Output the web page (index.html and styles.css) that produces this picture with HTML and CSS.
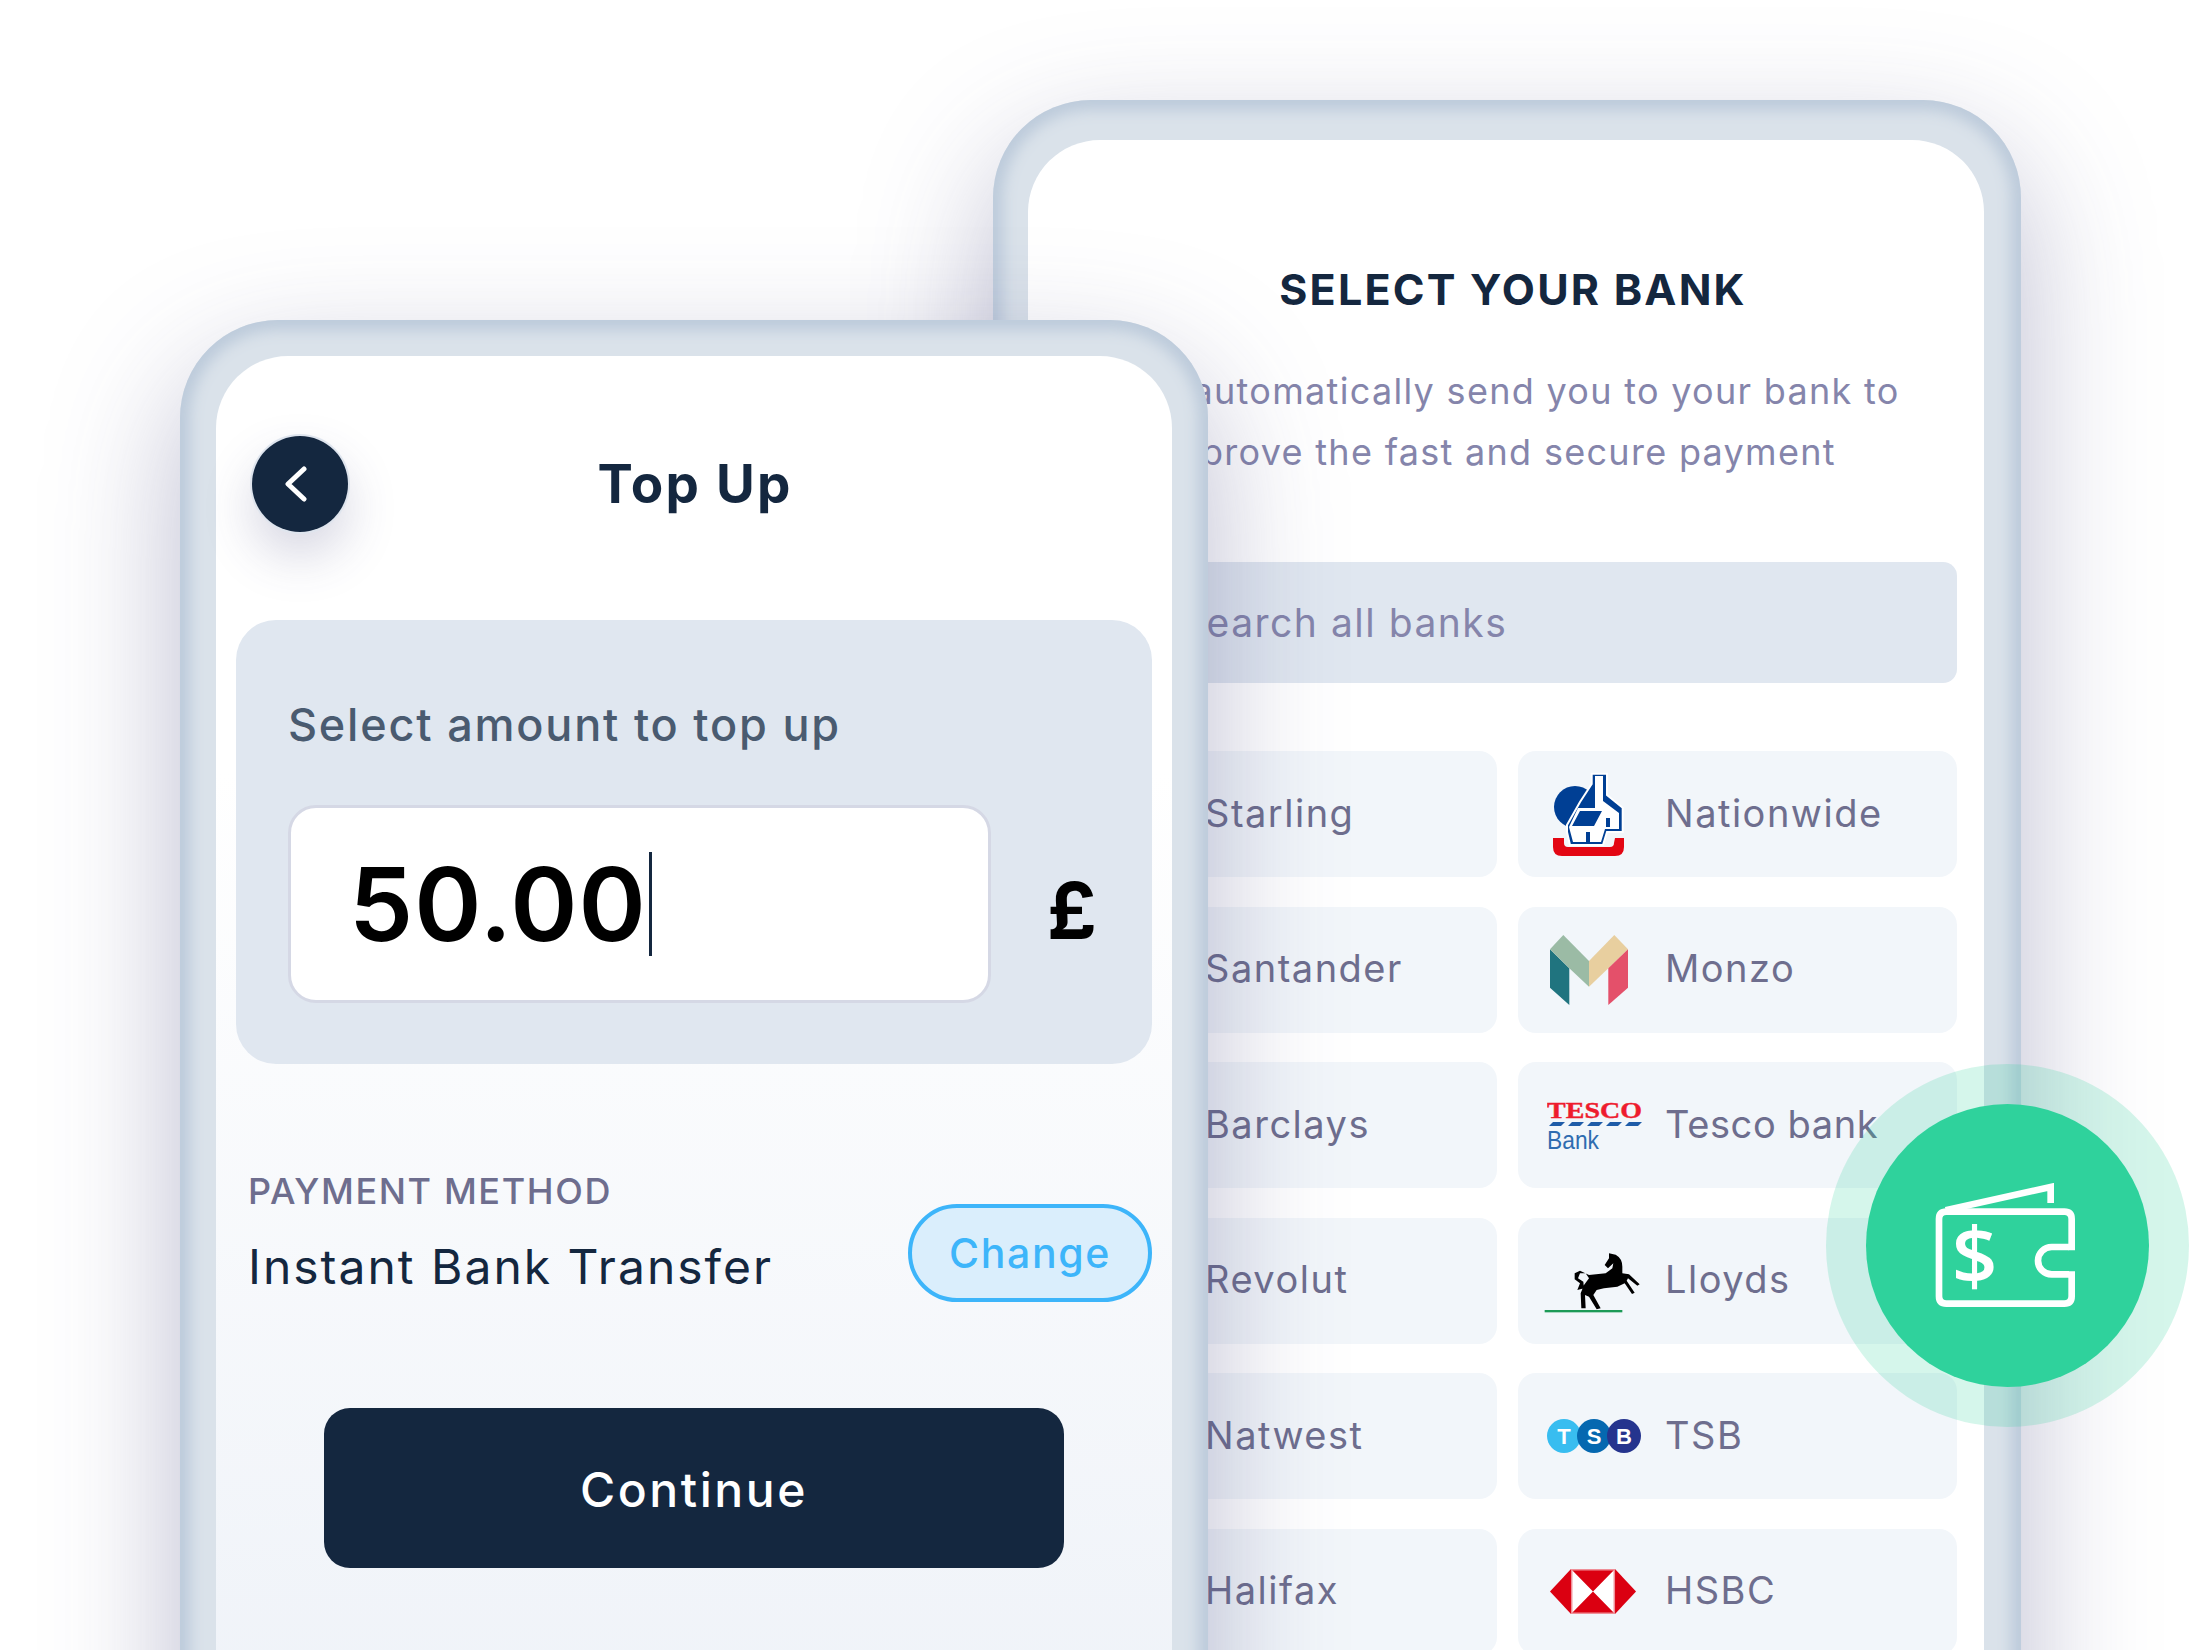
FILE: index.html
```html
<!DOCTYPE html>
<html>
<head>
    <title>Top Up</title>
    <link rel="stylesheet" href="styles.css">
</head>
<body>
    <div class="stage">
        <div class="phone phone-back">
            <div class="screen bank-screen">
                <h2 class="bank-title">SELECT YOUR BANK</h2>
                <p class="bank-desc">We'll automatically send you to your bank to<br>approve the fast and secure payment</p>
                <div class="search">Search all banks</div>
                <div class="bank-grid">
                    <div class="bank"><span class="bank-logo"></span><span class="bank-name">Starling</span></div>
                    <div class="bank">
                        <span class="bank-logo">
                            <svg class="logo-nationwide" width="72" height="84" viewBox="0 0 72 84">
                                <path fill="#e30613" d="M0 66H11V71Q11 75 15 75H57Q61 75 61 71L62 66H71V75Q71 84 62 84H9Q0 84 0 75Z"/>
                                <circle cx="22" cy="35" r="21" fill="#003f94"/>
                                <path fill="#003f94" stroke="#fff" stroke-width="2" d="M38.7 1.7H54V23L69.7 35.7V60H54L50 73H17L14 60V53L27 30L38.7 12Z"/>
                                <path fill="#fff" d="M42 4H50V29L66 41V57H52L48 70H20L16 55L25 36H42Z"/>
                                <path fill="#003f94" d="M27 39H49L41 54H19Z"/>
                                <path fill="#003f94" d="M53 46H57V55H53ZM33 60H37V70H33Z"/>
                            </svg>
                        </span>
                        <span class="bank-name">Nationwide</span>
                    </div>
                    <div class="bank"><span class="bank-logo"></span><span class="bank-name">Santander</span></div>
                    <div class="bank">
                        <span class="bank-logo">
                            <svg width="78" height="70" viewBox="0 0 78 70">
                                <path fill="#20747f" d="M0 14.3L19.3 33.3V70L0 52.7Z"/>
                                <path fill="#9bbba5" d="M0 14.3L13.3 0L39 26V51.7L19.3 33.3Z"/>
                                <path fill="#e8cf9f" d="M39 26L64.3 0L78 14.3L58.3 33.3L39 51.7Z"/>
                                <path fill="#e4506a" d="M78 14.3V52.7L58.3 70V33.3Z"/>
                            </svg>
                        </span>
                        <span class="bank-name">Monzo</span>
                    </div>
                    <div class="bank"><span class="bank-logo"></span><span class="bank-name">Barclays</span></div>
                    <div class="bank">
                        <span class="bank-logo">
                            <svg class="logo-tesco" width="100" height="66" viewBox="0 -8 100 66">
                                <text class="tesco-word" x="0" y="16.5" textLength="95" lengthAdjust="spacingAndGlyphs">TESCO</text>
                                <path fill="#1f5ca8" d="M2 25L6 21H18L14 25ZM21 25L25 21H37L33 25ZM40 25L44 21H56L52 25ZM59 25L63 21H75L71 25ZM78 25L82 21H95L91 25Z"/>
                                <text class="tesco-bank" x="0" y="48" textLength="52" lengthAdjust="spacingAndGlyphs">Bank</text>
                            </svg>
                        </span>
                        <span class="bank-name bank-name-tight">Tesco bank</span>
                    </div>
                    <div class="bank"><span class="bank-logo"></span><span class="bank-name">Revolut</span></div>
                    <div class="bank">
                        <span class="bank-logo">
                            <svg class="logo-lloyds" width="100" height="66" viewBox="70 30 300 198">
                                <path fill="#000" d="M265 40L285 44Q305 55 305 80V100L325 103L357 133L350 137L322 115L318 122L342 158L334 162L312 130L290 140L250 145L228 150L218 165L240 205L228 208L205 170L193 165L195 205L182 205L180 160L190 135L205 115L195 100L178 100L172 115L188 125L190 145L170 150L178 130L162 118V100L178 92L205 105L255 100L275 85L278 70L262 85L252 75L265 55Z"/>
                                <rect x="72" y="210" width="233" height="7" fill="#1d9a57"/>
                            </svg>
                        </span>
                        <span class="bank-name">Lloyds</span>
                    </div>
                    <div class="bank"><span class="bank-logo"></span><span class="bank-name">Natwest</span></div>
                    <div class="bank">
                        <span class="bank-logo">
                            <svg class="logo-tsb" width="94" height="36" viewBox="0 0 94 36">
                                <circle cx="17" cy="18" r="17" fill="#38bdf0"/>
                                <circle cx="47" cy="18" r="17" fill="#0568b0"/>
                                <circle cx="77" cy="18" r="17" fill="#25348e"/>
                                <text class="tsb-letter" x="17" y="26">T</text>
                                <text class="tsb-letter" x="47" y="26">S</text>
                                <text class="tsb-letter" x="77" y="26">B</text>
                            </svg>
                        </span>
                        <span class="bank-name">TSB</span>
                    </div>
                    <div class="bank"><span class="bank-logo"></span><span class="bank-name">Halifax</span></div>
                    <div class="bank">
                        <span class="bank-logo">
                            <svg width="86" height="45" viewBox="0 0 86 45">
                                <path fill="#db0011" d="M0 22.5L21 0V45Z"/>
                                <path fill="#db0011" d="M86 22.5L65 0V45Z"/>
                                <path fill="#fff" d="M21 0H65V45H21Z"/>
                                <path fill="#db0011" d="M21 45H65L43 22.5ZM21 0H65L43 22.5Z"/>
                                <path fill="none" stroke="#ef8f98" stroke-width="1.5" d="M21.7 .7H64.3V44.3H21.7Z"/>
                            </svg>
                        </span>
                        <span class="bank-name">HSBC</span>
                    </div>
                </div>
            </div>
        </div>

        <div class="phone phone-front">
            <div class="screen topup-screen">
                <div class="topup-header">
                    <button class="back-btn">
                        <svg width="24" height="36" viewBox="0 0 24 36">
                            <path d="M20 3L4 18L20 33" fill="none" stroke="#fff" stroke-width="5" stroke-linecap="round" stroke-linejoin="round"/>
                        </svg>
                    </button>
                    <h1 class="topup-title">Top Up</h1>
                </div>
                <div class="amount-panel">
                    <div class="amount-label">Select amount to top up</div>
                    <div class="amount-row">
                        <div class="amount-input"><span class="amount-value">50.00</span><span class="caret"></span></div>
                        <span class="currency">£</span>
                    </div>
                </div>
                <div class="payment">
                    <div>
                        <div class="payment-label">PAYMENT METHOD</div>
                        <div class="payment-name">Instant Bank Transfer</div>
                    </div>
                    <button class="change-btn">Change</button>
                </div>
                <button class="continue-btn">Continue</button>
            </div>
        </div>

        <div class="wallet-badge">
            <svg width="140" height="125" viewBox="168 70 420 375">
                <g fill="none" stroke="#fff" stroke-width="20">
                    <path d="M578 272V178Q578 156 556 156H202Q180 156 180 178V410Q180 432 202 432H556Q578 432 578 410V335"/>
                    <path d="M200 152L515 82V130"/>
                    <path d="M570 262H518A40 40 0 0 0 518 344H570"/>
                </g>
                <text class="wallet-dollar" x="287" y="374">$</text>
            </svg>
        </div>
    </div>
</body>
</html>
```

FILE: styles.css
```css
body {
    margin: 0;
    background-color: #fff;
    font-family: Inter, "Noto Sans", sans-serif;
}

h1, h2, p {
    margin: 0;
}

button {
    border: none;
    font-family: inherit;
    cursor: pointer;
}

.stage {
    position: relative;
    width: 2200px;
    height: 1650px;
    overflow: hidden;
    background-color: #fff;
    padding: 100px 0 0 993px;
    box-sizing: border-box;
}

.phone {
    box-sizing: border-box;
    width: 1028px;
    height: 1700px;
    padding: 40px 37px 0 35px;
    background-color: #dae2ea;
    border-radius: 98px;
    box-shadow: inset 0 0 14px 10px #bdcbdb, 0 50px 130px rgba(70, 70, 125, 0.36);
}

.phone-front {
    position: absolute;
    left: 180px;
    top: 320px;
    width: 1028px;
    padding: 36px 36px 0;
}

.screen {
    box-sizing: border-box;
    height: 100%;
    border-radius: 72px 72px 0 0;
    background-color: #fff;
}

/* back phone */
.bank-screen {
    padding: 124px 27px 0;
}

.bank-title {
    padding-left: 14px;
    font-size: 43px;
    line-height: 50px;
    font-weight: 700;
    text-align: center;
    letter-spacing: 2.2px;
    color: #14273f;
}

.bank-desc {
    margin-top: 47px;
    padding-right: 20px;
    font-size: 36px;
    line-height: 61px;
    text-align: center;
    letter-spacing: 1.3px;
    color: #8585ab;
}

.search {
    margin-top: 79px;
    height: 121px;
    line-height: 121px;
    padding-left: 125px;
    background-color: #e0e7f0;
    border-radius: 14px;
    font-size: 39px;
    letter-spacing: 1.5px;
    color: #8585ab;
}

.bank-grid {
    display: grid;
    grid-template-columns: 1fr 1fr;
    gap: 29.5px 21px;
    margin: 68px 0 0 3px;
}

.bank {
    display: flex;
    align-items: center;
    height: 126px;
    background-color: #f2f6fa;
    border-radius: 18px;
}

.bank-logo {
    display: flex;
    flex: none;
    width: 147px;
    padding-left: 32px;
    box-sizing: border-box;
    align-items: center;
}

.bank-logo svg {
    display: block;
}

.bank-name {
    padding-bottom: 3px;
    font-size: 38px;
    letter-spacing: 1.5px;
    color: #6e6e8e;
}

.bank-name-tight {
    letter-spacing: 0.6px;
}

.logo-nationwide {
    margin-left: 3px;
}

.logo-tesco {
    margin: 2px 0 0 -3px;
}

.logo-lloyds {
    margin: 5px 0 0 -6px;
}

.logo-tsb {
    margin-left: -3px;
}

.tesco-word {
    font-family: "Liberation Serif", serif;
    font-size: 24px;
    font-weight: 700;
    fill: #ee1c2e;
    stroke: #ee1c2e;
    stroke-width: 0.4px;
}

.tesco-bank {
    font-family: "Liberation Sans", sans-serif;
    font-size: 26px;
    fill: #2f6cb0;
}

.tsb-letter {
    font-family: "Liberation Sans", sans-serif;
    font-size: 22px;
    font-weight: 700;
    text-anchor: middle;
    fill: #fff;
}

/* front phone */
.topup-screen {
    padding: 77px 20px 0;
    background: linear-gradient(to bottom, #fff 25%, #eef2f8 85%);
}

.topup-header {
    position: relative;
    display: flex;
    align-items: center;
    height: 100px;
    padding-left: 16px;
}

.back-btn {
    display: flex;
    align-items: center;
    justify-content: center;
    width: 96px;
    height: 96px;
    margin-top: 2px;
    padding: 0 8px 0 0;
    border-radius: 50%;
    background-color: #14273f;
    box-shadow: 0 0 0 2px #dfe5ee, 0 24px 50px rgba(70, 70, 125, 0.22);
}

.topup-title {
    flex: 1;
    margin: 2px 110px 0 0;
    text-align: center;
    font-size: 53px;
    font-weight: 700;
    letter-spacing: 2.2px;
    color: #14273f;
}

.amount-panel {
    margin-top: 87px;
    height: 444px;
    box-sizing: border-box;
    padding: 80px 52px 0;
    background-color: #e0e7f0;
    border-radius: 40px;
}

.amount-label {
    font-size: 45px;
    line-height: 50px;
    font-weight: 500;
    letter-spacing: 1.8px;
    color: #4a5b70;
}

.amount-row {
    display: flex;
    align-items: center;
    margin-top: 55px;
    margin-right: -12px;
}

.amount-input {
    display: flex;
    align-items: center;
    box-sizing: border-box;
    width: 703px;
    height: 198px;
    padding-left: 58px;
    background-color: #fff;
    border: 3px solid #d5d8e5;
    border-radius: 28px;
}

.amount-value {
    font-size: 102px;
    font-weight: 600;
    letter-spacing: 1px;
    color: #000;
}

.caret {
    width: 3px;
    height: 104px;
    margin-left: 2px;
    background-color: #14273f;
}

.currency {
    margin: 12px 0 0 56px;
    font-size: 78px;
    font-weight: 700;
    color: #000;
}

.payment {
    display: flex;
    justify-content: space-between;
    align-items: flex-end;
    margin-top: 102px;
    padding-left: 12px;
}

.payment-label {
    font-size: 36px;
    line-height: 50px;
    font-weight: 500;
    letter-spacing: 1.6px;
    color: #6e6e8e;
}

.payment-name {
    margin-top: 18px;
    font-size: 48px;
    line-height: 66px;
    letter-spacing: 2px;
    color: #14273f;
}

.change-btn {
    box-sizing: border-box;
    width: 244px;
    height: 98px;
    margin-bottom: -2px;
    border: 4px solid #3db5fa;
    border-radius: 49px;
    background-color: #daeefc;
    font-size: 41px;
    font-weight: 500;
    letter-spacing: 1.6px;
    color: #3db5fa;
}

.continue-btn {
    display: block;
    width: 740px;
    height: 160px;
    margin: 108px auto 0;
    padding-top: 3px;
    border-radius: 26px;
    background-color: #14273f;
    font-size: 48px;
    font-weight: 500;
    letter-spacing: 2.6px;
    color: #fff;
}

/* green wallet badge */
.wallet-badge {
    position: absolute;
    left: 1866px;
    top: 1104px;
    display: flex;
    align-items: center;
    justify-content: center;
    box-sizing: border-box;
    width: 283px;
    height: 283px;
    padding-right: 6px;
    border-radius: 50%;
    background-color: #2fd29c;
    box-shadow: 0 0 0 40px rgba(47, 210, 156, 0.2);
}

.wallet-dollar {
    font-family: "Open Sans", sans-serif;
    font-size: 240px;
    font-weight: 600;
    text-anchor: middle;
    fill: #fff;
}
```
